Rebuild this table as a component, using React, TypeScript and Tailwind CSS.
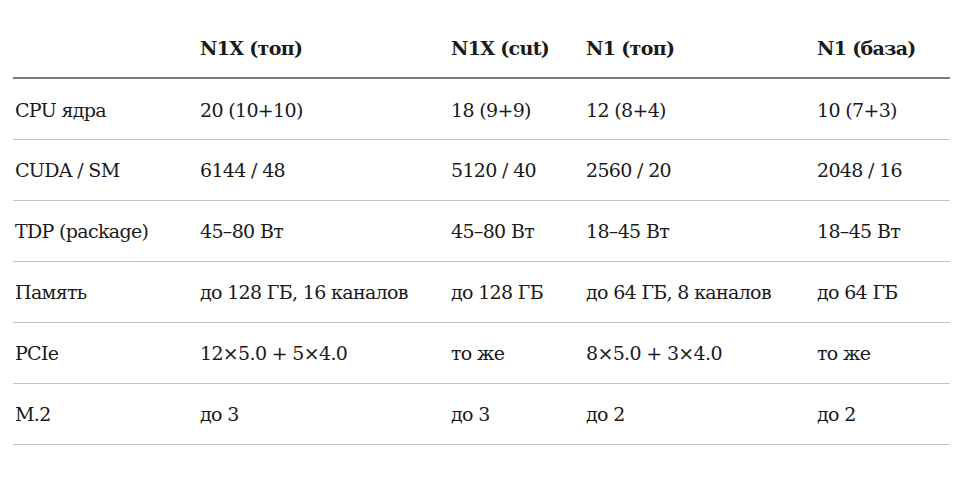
const columns = ['', 'N1X (топ)', 'N1X (cut)', 'N1 (топ)', 'N1 (база)']

const rows: string[][] = [
  ['CPU ядра', '20 (10+10)', '18 (9+9)', '12 (8+4)', '10 (7+3)'],
  ['CUDA / SM', '6144 / 48', '5120 / 40', '2560 / 20', '2048 / 16'],
  ['TDP (package)', '45–80 Вт', '45–80 Вт', '18–45 Вт', '18–45 Вт'],
  ['Память', 'до 128 ГБ, 16 каналов', 'до 128 ГБ', 'до 64 ГБ, 8 каналов', 'до 64 ГБ'],
  ['PCIe', '12×5.0 + 5×4.0', 'то же', '8×5.0 + 3×4.0', 'то же'],
  ['M.2', 'до 3', 'до 3', 'до 2', 'до 2'],
]

const widths = ['w-[185px]', 'w-[251px]', 'w-[135px]', 'w-[231px]', 'w-[135px]']

export default function App() {
  return (
    <div className="min-h-[478px] bg-white pt-[18px] pl-[13px] pr-[19px] font-['DejaVu_Serif',serif] text-[19px] tracking-[-0.035em] text-[#1a1a1a]">
      <table className="w-[937px] table-fixed border-collapse">
        <colgroup>
          {widths.map((w, i) => (
            <col key={i} className={w} />
          ))}
        </colgroup>
        <thead>
          <tr className="border-b-2 border-[#7a7a7a]">
            {columns.map((c, i) => (
              <th key={i} className="h-[60px] pl-[2px] pt-[2px] text-left align-middle font-bold">
                {c}
              </th>
            ))}
          </tr>
        </thead>
        <tbody>
          {rows.map((row) => (
            <tr key={row[0]} className="border-b border-[#c4c4c4]">
              {row.map((cell, i) => (
                <td key={i} className="h-[61px] pl-[2px] pt-[2px] align-middle whitespace-nowrap">
                  {cell}
                </td>
              ))}
            </tr>
          ))}
        </tbody>
      </table>
    </div>
  )
}
